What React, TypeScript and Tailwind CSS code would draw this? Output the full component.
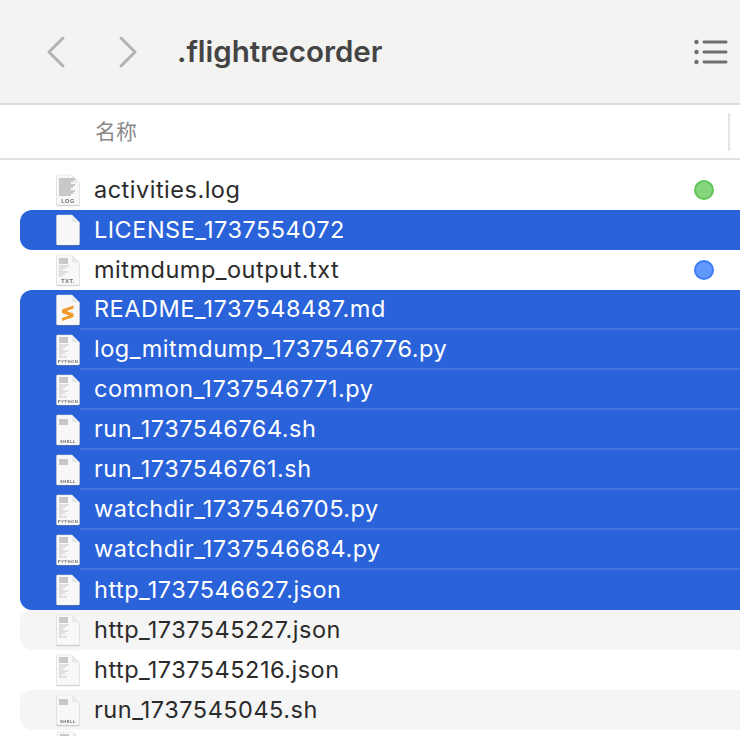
import React from 'react';

type Row = {
  name: string;
  kind: 'log' | 'blank' | 'txt' | 'md' | 'python' | 'shell' | 'json';
  selected?: boolean;
  striped?: boolean;
  first?: boolean;
  last?: boolean;
  dot?: string;
};

const rows: Row[] = [
  { name: 'activities.log', kind: 'log', dot: 'bg-[#85d67c] border-[#5fc755]' },
  { name: 'LICENSE_1737554072', kind: 'blank', selected: true, first: true, last: true },
  { name: 'mitmdump_output.txt', kind: 'txt', dot: 'bg-[#6298fb] border-[#3b7ef8]' },
  { name: 'README_1737548487.md', kind: 'md', selected: true, first: true },
  { name: 'log_mitmdump_1737546776.py', kind: 'python', selected: true },
  { name: 'common_1737546771.py', kind: 'python', selected: true },
  { name: 'run_1737546764.sh', kind: 'shell', selected: true },
  { name: 'run_1737546761.sh', kind: 'shell', selected: true },
  { name: 'watchdir_1737546705.py', kind: 'python', selected: true },
  { name: 'watchdir_1737546684.py', kind: 'python', selected: true },
  { name: 'http_1737546627.json', kind: 'json', selected: true, last: true },
  { name: 'http_1737545227.json', kind: 'json', striped: true },
  { name: 'http_1737545216.json', kind: 'json' },
  { name: 'run_1737545045.sh', kind: 'shell', striped: true },
];

const labels: Record<string, string> = {
  log: 'LOG',
  txt: 'TXT.',
  python: 'PYTHON',
  shell: 'SHELL',
};

const FileIcon = ({ kind }: { kind: Row['kind'] }) => {
  const label = labels[kind];
  const lines =
    kind === 'log'
      ? [3, 5, 7, 9, 11, 13, 15, 17, 19]
      : kind === 'txt'
        ? [3, 5, 7, 10, 12, 14, 16, 18, 20]
        : kind === 'shell'
          ? [4, 6, 8]
          : [2, 4, 6, 9, 11, 13, 15, 17, 19, 21];
  return (
    <svg width="26" height="34" viewBox="0 0 26 34" className="shrink-0 drop-shadow-[0_1px_0.5px_rgba(0,0,0,0.18)]">
      <path
        d="M1.5 3 Q1.5 2 2.5 2 H17 L24.5 9.5 V31 Q24.5 32 23.5 32 H2.5 Q1.5 32 1.5 31 Z"
        fill="#f8f8f8"
        stroke="#dcdcdc"
        strokeWidth="0.5"
      />
      <path d="M17 2 V8 Q17 9.5 18.5 9.5 H24.5 Z" fill="#e9e9e9" />
      {kind === 'md' && (
        <path
          d="M18.5 12.5 L7 16.5 V20 L14 22.5 L7 25 V28 L18.5 24 V20.5 L11.5 18 L18.5 15.5 Z"
          fill="#f09a2c"
        />
      )}
      {kind !== 'md' &&
        kind !== 'blank' &&
        lines.map((y, i) => (
          <line
            key={y}
            x1="4"
            x2={kind === 'log' ? 20 - (i % 3) * 2 : i < 3 ? 13 : 7 + (i * 5) % 8}
            y1={y + 3}
            y2={y + 3}
            stroke={i < 3 || kind === 'log' ? '#b4b4b4' : '#d6d6d6'}
            strokeWidth="1.4"
          />
        ))}
      {label && (
        <text
          x="13"
          y="30"
          textAnchor="middle"
          fontSize={label.length > 4 ? 4.2 : 5.6}
          letterSpacing="0.5"
          fontWeight="700"
          fontFamily="'Liberation Sans', sans-serif"
          fill="#6a6a6a"
        >
          {label}
        </text>
      )}
    </svg>
  );
};

const FileRow = ({ row }: { row: Row }) => (
  <div
    className={`flex h-10 ml-5 items-center ${row.selected ? 'bg-[#2962d9] text-white' : 'text-[#2b2b2b]'} ${
      row.striped ? 'bg-[#f4f5f4] rounded-l-[12px]' : ''
    } ${row.first ? 'rounded-tl-[12px]' : ''} ${row.last ? 'rounded-bl-[12px]' : ''}`}
  >
    <div className="w-[60px] pl-[35px] flex justify-start">
      <FileIcon kind={row.kind} />
    </div>
    <div
      className={`flex flex-1 h-full items-center pl-[14px] ${
        row.selected && !row.last ? 'border-b-2 border-[#4475df]' : ''
      }`}
    >
      <span className="text-[23.5px] tracking-[0.5px] flex-1">{row.name}</span>
      {row.dot && <span className={`w-5 h-5 mr-[26px] rounded-full border-2 ${row.dot}`} />}
    </div>
  </div>
);

export default function App() {
  return (
    <div className="w-[740px] h-[736px] overflow-hidden bg-white font-['Inter','Noto_Sans_CJK_SC',sans-serif]">
      <header className="flex h-[105px] items-center bg-[#f3f3f2] border-b-2 border-[#dcdcdc]">
        <svg width="24" height="34" viewBox="0 0 24 34" className="ml-[44px]" fill="none" stroke="#b3b3b3" strokeWidth="3" strokeLinecap="round" strokeLinejoin="round">
          <path d="M19 3 L5 17 L19 31" />
        </svg>
        <svg width="24" height="34" viewBox="0 0 24 34" className="ml-[48px]" fill="none" stroke="#b3b3b3" strokeWidth="3" strokeLinecap="round" strokeLinejoin="round">
          <path d="M5 3 L19 17 L5 31" />
        </svg>
        <h1 className="ml-[37px] flex-1 text-[29.5px] font-semibold text-[#444444]">.flightrecorder</h1>
        <svg width="34" height="28" viewBox="0 0 34 28" className="mr-[12px]" fill="#6f6f6d">
          <circle cx="2.5" cy="4" r="2.2" />
          <circle cx="2.5" cy="14" r="2.2" />
          <circle cx="2.5" cy="24" r="2.2" />
          <rect x="8.5" y="2.6" width="25" height="2.8" rx="1.4" />
          <rect x="8.5" y="12.6" width="25" height="2.8" rx="1.4" />
          <rect x="8.5" y="22.6" width="25" height="2.8" rx="1.4" />
        </svg>
      </header>
      <div className="flex h-[55px] items-center border-b-2 border-[#e2e2e2] pl-[95px] pr-[10px]">
        <span className="flex-1 text-[21px] text-[#8a8a8a]">名称</span>
        <span className="w-[2px] h-[38px] bg-[#e4e4e4]" />
      </div>
      <div className="pt-[10px]">
        {rows.map(row => (
          <FileRow key={row.name} row={row} />
        ))}
        <div className="ml-5 pl-[36px]">
          <FileIcon kind="json" />
        </div>
      </div>
    </div>
  );
}
